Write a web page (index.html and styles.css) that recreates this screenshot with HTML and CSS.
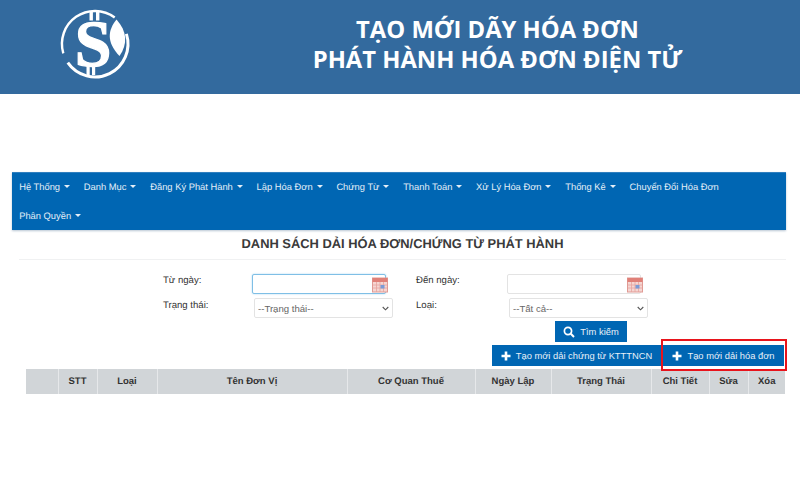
FILE: index.html
```html
<!DOCTYPE html>
<html lang="vi">
<head>
<meta charset="utf-8">
<title>Tạo mới dãy hóa đơn</title>
<link rel="stylesheet" href="styles.css">
</head>
<body>
<header class="banner">
  <svg class="logo" width="72" height="72" viewBox="0 0 72 72">
    <path d="M55.7 9.5 A33 33 0 0 0 4.3 45.3" fill="none" stroke="#fff" stroke-width="2.4"/>
    <path d="M8.8 54.7 A33 33 0 0 0 67.4 25.9" fill="none" stroke="#fff" stroke-width="3"/>
    <rect x="30.5" y="3.5" width="3.4" height="9" fill="#fff"/>
    <rect x="37" y="3.5" width="3.4" height="9" fill="#fff"/>
    <rect x="27.5" y="58" width="3.2" height="9" fill="#fff"/>
    <rect x="33" y="58" width="3.2" height="9" fill="#fff"/>
    <text class="logo-s" x="34" y="58" text-anchor="middle">S</text>
    <path d="M57.5 11.5 C49 22 47 34 60.5 48 C69 36 68 23 57.5 11.5 Z" fill="#fff"/>
  </svg>
  <h1 class="banner-title">TẠO MỚI DÃY HÓA ĐƠN<br>PHÁT HÀNH HÓA ĐƠN ĐIỆN TỬ</h1>
</header>
<main class="page">
  <nav class="nav">
    <a class="nav-item caret">Hệ Thống</a>
    <a class="nav-item caret">Danh Mục</a>
    <a class="nav-item caret">Đăng Ký Phát Hành</a>
    <a class="nav-item caret">Lập Hóa Đơn</a>
    <a class="nav-item caret">Chứng Từ</a>
    <a class="nav-item caret">Thanh Toán</a>
    <a class="nav-item caret">Xử Lý Hóa Đơn</a>
    <a class="nav-item caret">Thống Kê</a>
    <a class="nav-item">Chuyển Đổi Hóa Đơn</a>
    <a class="nav-item caret">Phân Quyền</a>
  </nav>
  <h2 class="list-title">DANH SÁCH DẢI HÓA ĐƠN/CHỨNG TỪ PHÁT HÀNH</h2>
  <form class="filters">
    <label class="lbl">Từ ngày:</label>
    <div class="date focus"><input class="date-input" type="text"><svg class="cal" width="16" height="16" viewBox="0 0 16 16"><use href="#cal"/></svg></div>
    <label class="lbl">Đến ngày:</label>
    <div class="date"><input class="date-input" type="text"><svg class="cal" width="16" height="16" viewBox="0 0 16 16"><use href="#cal"/></svg></div>
    <label class="lbl lbl-2">Trạng thái:</label>
    <select class="sel"><option>--Trạng thái--</option></select>
    <label class="lbl lbl-2">Loại:</label>
    <select class="sel"><option>--Tất cả--</option></select>
  </form>
  <div class="search-row">
    <button class="btn" type="button">
      <svg width="12" height="12" viewBox="0 0 12 12"><circle cx="5" cy="5" r="3.6" fill="none" stroke="#fff" stroke-width="1.7"/><path d="M7.8 7.8 L11 11" stroke="#fff" stroke-width="2"/></svg>
      Tìm kiếm
    </button>
  </div>
  <div class="action-row">
    <button class="btn btn-wide" type="button"><svg width="10" height="10" viewBox="0 0 10 10"><path d="M5 0.5 V9.5 M0.5 5 H9.5" stroke="#fff" stroke-width="2.6"/></svg>Tạo mới dải chứng từ KTTTNCN</button>
    <button class="btn btn-new" type="button"><svg width="10" height="10" viewBox="0 0 10 10"><path d="M5 0.5 V9.5 M0.5 5 H9.5" stroke="#fff" stroke-width="2.6"/></svg>Tạo mới dải hóa đơn<span class="highlight"></span></button>
  </div>
  <table class="grid">
    <colgroup>
      <col class="c1"><col class="c2"><col class="c3"><col class="c4"><col class="c5"><col class="c6"><col class="c7"><col class="c8"><col class="c9"><col class="c10">
    </colgroup>
    <thead>
      <tr><th></th><th>STT</th><th>Loại</th><th>Tên Đơn Vị</th><th>Cơ Quan Thuế</th><th>Ngày Lập</th><th>Trạng Thái</th><th>Chi Tiết</th><th>Sửa</th><th>Xóa</th></tr>
    </thead>
  </table>
</main>
<svg class="defs" width="0" height="0">
  <defs>
    <g id="cal">
      <rect x="0.5" y="1" width="15" height="14" fill="#f5d6d2" stroke="#e09a94"/>
      <rect x="0.5" y="1" width="15" height="4" fill="#e08078"/>
      <path d="M1 8 H15 M1 11 H15 M4.5 5 V15 M8 5 V15 M11.5 5 V15" stroke="#e6a39e" stroke-width="0.8"/>
      <rect x="8.5" y="8" width="4" height="3.5" fill="#7b9bd6"/>
    </g>
  </defs>
</svg>
</body>
</html>
```
FILE: styles.css
```css
* { box-sizing: border-box; }
html, body { margin: 0; padding: 0; background: #fff; }
body { font-family: "Liberation Sans", Arial, sans-serif; width: 800px; height: 500px; overflow: hidden; color: #333; text-rendering: geometricPrecision; }

.banner { height: 94px; background: #336a9e; display: flex; align-items: center; padding-left: 59px; }
.logo { flex: none; margin-top: -7px; overflow: visible; }
.logo-s { font-family: "Liberation Serif", serif; font-weight: 700; font-size: 66px; fill: #fff; stroke: #fff; stroke-width: 1.2px; }
.banner-title { margin: -7px 0 0; flex: 1; padding-left: 64px; font-family: "Open Sans", sans-serif; font-weight: 700; font-size: 23.8px; line-height: 30px; color: #fff; text-align: center; }

.page { padding: 78px 14px 0 12px; }
.nav { display: flex; flex-wrap: wrap; background: #0066b3; border-top: 1px solid #2f7fbf; box-shadow: 0 1px 2px #b9c6d4; width: 774px; height: 58px; align-content: flex-start; padding-left: 0.3px; }
.nav-item { height: 29px; line-height: 29px; padding: 0 6.9px; font-size: 9.35px; color: #e4eef7; white-space: nowrap; }
.caret::after { content: ""; display: inline-block; margin-left: 4px; vertical-align: 2px; border-top: 3px solid #e4eef7; border-left: 3px solid transparent; border-right: 3px solid transparent; }

.list-title { margin: 6px 0 0 7px; padding-bottom: 8px; height: 24px; border-bottom: 1px solid #f0f1f2; font-size: 12.9px; line-height: 16px; font-weight: 700; text-align: center; color: #3a3a3a; }

.filters { display: grid; grid-template-columns: 89px 164px 91px 141px; grid-template-rows: 20px 20px; row-gap: 4px; margin: 14px 0 0 151px; align-items: start; }
.lbl { font-size: 9.6px; line-height: 12px; color: #333; padding-top: 1px; }
.lbl-2 { padding-top: 2px; }
.date { position: relative; width: 134px; height: 20px; }
.date-input { display: block; width: 100%; height: 100%; border: 1px solid #e3e3e3; border-radius: 2px; background: #fff; padding: 0; outline: none; }
.date.focus .date-input { border-color: #7fbfe6; box-shadow: 0 0 2px #a6d6f0; }
.cal { position: absolute; right: -2px; top: 3px; }
.sel { appearance: none; width: 139px; height: 20px; margin-left: 2px; font-family: "Liberation Sans", Arial, sans-serif; font-size: 9.6px; color: #666; background: #fff url("data:image/svg+xml,%3Csvg xmlns='http://www.w3.org/2000/svg' width='7' height='5' viewBox='0 0 7 5'%3E%3Cpath d='M.7 1 3.5 3.8 6.3 1' fill='none' stroke='%23555' stroke-width='1.1'/%3E%3C/svg%3E") no-repeat right 3px center; border: 1px solid #e3e3e3; border-radius: 2px; padding: 0 0 0 3px; }

.search-row { display: flex; margin: 3px 0 0 543px; }
.btn { display: inline-flex; align-items: center; justify-content: center; gap: 5px; height: 21px; border: 0; background: #0066b3; color: #e8f0f8; font-family: "Liberation Sans", Arial, sans-serif; font-size: 9.35px; padding: 0; }
.search-row .btn { width: 72px; }
.action-row { display: flex; gap: 2px; justify-content: flex-end; margin-top: 3px; padding-right: 2px; }
.btn-wide { width: 169px; }
.btn-new { width: 121px; position: relative; }
.highlight { position: absolute; left: -2px; right: -3px; top: -6px; bottom: -5px; border: 2.5px solid #e8141c; pointer-events: none; }

.grid { width: 759px; margin: 3px 0 0 14px; border-collapse: collapse; table-layout: fixed; }
.grid th { height: 25px; padding: 0; background: #d1d5d8; border-left: 1px solid #e6e8ea; font-size: 9.5px; font-weight: 700; color: #333; text-align: center; }
.grid th:first-child { border-left: 0; }
.c1 { width: 32px; } .c2 { width: 39px; } .c3 { width: 60px; } .c4 { width: 190px; } .c5 { width: 128px; }
.c6 { width: 76px; } .c7 { width: 100px; } .c8 { width: 58px; } .c9 { width: 39px; } .c10 { width: 37px; }
.defs { position: absolute; }
```
